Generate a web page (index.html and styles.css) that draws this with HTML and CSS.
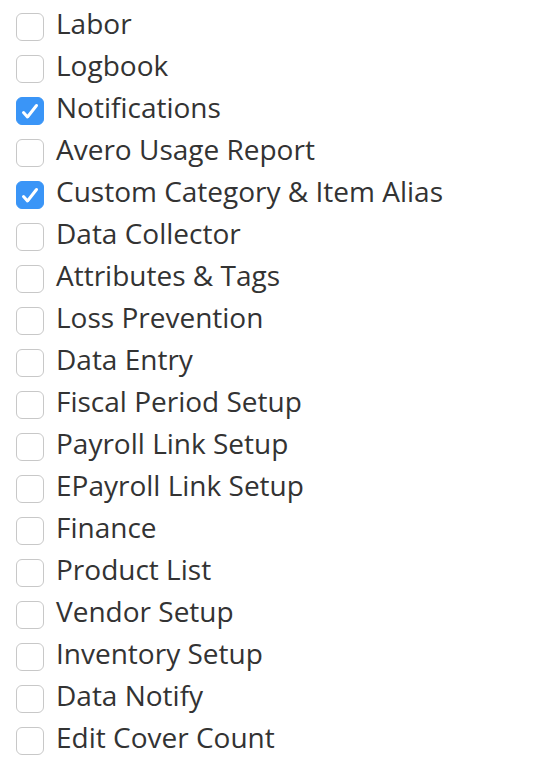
FILE: index.html
```html
<!DOCTYPE html>
<html>
<head>
<meta charset="utf-8">
<link rel="stylesheet" href="styles.css">
</head>
<body>
<ul class="list">
  <li class="item"><span class="box"></span><span class="label">Labor</span></li>
  <li class="item"><span class="box"></span><span class="label">Logbook</span></li>
  <li class="item"><span class="box checked"><svg viewBox="0 0 28 28" width="28" height="28"><path d="M7.5 15.5 L11.5 20 L20.5 8.5" fill="none" stroke="#fff" stroke-width="3" stroke-linecap="round" stroke-linejoin="round"/></svg></span><span class="label">Notifications</span></li>
  <li class="item"><span class="box"></span><span class="label">Avero Usage Report</span></li>
  <li class="item"><span class="box checked"><svg viewBox="0 0 28 28" width="28" height="28"><path d="M7.5 15.5 L11.5 20 L20.5 8.5" fill="none" stroke="#fff" stroke-width="3" stroke-linecap="round" stroke-linejoin="round"/></svg></span><span class="label">Custom Category &amp; Item Alias</span></li>
  <li class="item"><span class="box"></span><span class="label">Data Collector</span></li>
  <li class="item"><span class="box"></span><span class="label">Attributes &amp; Tags</span></li>
  <li class="item"><span class="box"></span><span class="label">Loss Prevention</span></li>
  <li class="item"><span class="box"></span><span class="label">Data Entry</span></li>
  <li class="item"><span class="box"></span><span class="label">Fiscal Period Setup</span></li>
  <li class="item"><span class="box"></span><span class="label">Payroll Link Setup</span></li>
  <li class="item"><span class="box"></span><span class="label">EPayroll Link Setup</span></li>
  <li class="item"><span class="box"></span><span class="label">Finance</span></li>
  <li class="item"><span class="box"></span><span class="label">Product List</span></li>
  <li class="item"><span class="box"></span><span class="label">Vendor Setup</span></li>
  <li class="item"><span class="box"></span><span class="label">Inventory Setup</span></li>
  <li class="item"><span class="box"></span><span class="label">Data Notify</span></li>
  <li class="item"><span class="box"></span><span class="label">Edit Cover Count</span></li>
</ul>
</body>
</html>
```
FILE: styles.css
```css
html, body {
  margin: 0;
  padding: 0;
  background: #fff;
}
body {
  font-family: "Open Sans", "Liberation Sans", sans-serif;
  color: #333;
}
.list {
  list-style: none;
  margin: 0;
  padding: 6px 0 0 16px;
  display: flex;
  flex-direction: column;
}
.item {
  height: 42px;
  display: flex;
  align-items: center;
  gap: 12px;
}
.box {
  width: 28px;
  height: 28px;
  box-sizing: border-box;
  border: 1px solid #c8c8c8;
  border-radius: 6px;
  background: #fff;
  flex: none;
  display: flex;
}
.box.checked {
  background: #3a95f7;
  border-color: #3a95f7;
}
.box svg {
  margin: -1px;
}
.label {
  font-size: 28px;
  line-height: 1;
  padding-bottom: 8px;
  letter-spacing: 0;
}
```
